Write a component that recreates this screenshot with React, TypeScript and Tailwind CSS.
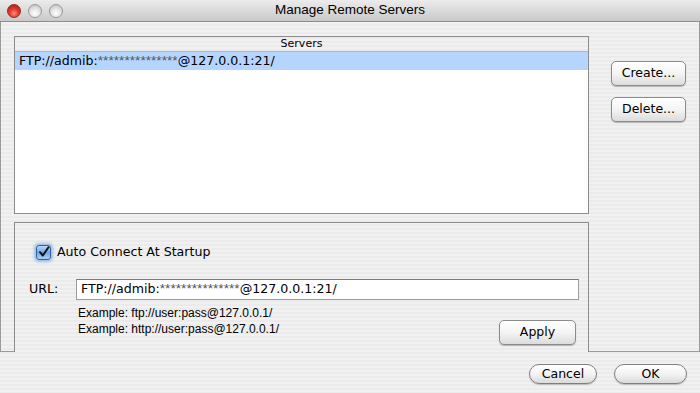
import type { FC, ReactNode } from 'react';

const stripes =
  'bg-[repeating-linear-gradient(180deg,#ebebeb_0px,#ebebeb_2px,#f1f1f1_2px,#f1f1f1_4px)]';

const ui = '"DejaVu Sans", Verdana, sans-serif';

const AquaButton: FC<{ children: ReactNode; className?: string }> = ({ children, className = '' }) => (
  <button
    className={`flex items-center justify-center rounded-[5px] border border-[#8b8b8b] bg-gradient-to-b from-[#ffffff] via-[#f4f4f4] to-[#dcdcdc] text-[12.5px] text-black shadow-[0_1px_1px_rgba(0,0,0,0.25)] ${className}`}
    style={{ fontFamily: ui }}
  >
    {children}
  </button>
);

const PillButton: FC<{ children: ReactNode; className?: string }> = ({ children, className = '' }) => (
  <button
    className={`flex items-center justify-center rounded-full border border-[#7f7f7f] bg-gradient-to-b from-[#ffffff] via-[#f3f3f3] to-[#dadada] text-[12.5px] text-black shadow-[0_1px_1px_rgba(0,0,0,0.2)] ${className}`}
    style={{ fontFamily: ui }}
  >
    {children}
  </button>
);

const TrafficLight: FC<{ red?: boolean }> = ({ red }) => (
  <div
    className={`h-[14px] w-[14px] rounded-full border ${
      red
        ? 'border-[#8e2b22] bg-[radial-gradient(circle_at_50%_70%,#ff8a7a_0%,#e0382b_45%,#9c1c14_100%)]'
        : 'border-[#9a9a9a] bg-[radial-gradient(circle_at_50%_70%,#ffffff_0%,#e2e2e2_50%,#b3b3b3_100%)]'
    }`}
  />
);

const Checkbox: FC = () => (
  <div className="flex h-[15px] w-[15px] items-center justify-center rounded-[3px] border border-[#2f5f9e] bg-gradient-to-b from-[#b9d8f6] via-[#6fa6e4] to-[#a9d1f7] shadow-[0_0_3px_2px_rgba(90,150,230,0.55)]">
    <svg width="12" height="12" viewBox="0 0 12 12">
      <path d="M2 6.2 L4.8 9.5 L10.5 1.2" fill="none" stroke="#111" strokeWidth="2" strokeLinecap="round" strokeLinejoin="round" />
    </svg>
  </div>
);

// masked url: password stars are drawn smaller and lighter, as the Aqua font does
const MaskedUrl: FC = () => (
  <span className="whitespace-nowrap text-[12.6px] text-black" style={{ fontFamily: ui }}>
    FTP://admib:
    <span className="text-[13.7px] text-[#555]" style={{ fontFamily: '"Liberation Sans", Arial, sans-serif' }}>
      ***************
    </span>
    @127.0.0.1:21/
  </span>
);

export default function App() {
  return (
    <div
      className={`flex h-[393px] w-[700px] flex-col overflow-hidden ${stripes}`}
      style={{ fontFamily: '"Liberation Sans", Arial, sans-serif' }}
    >
      {/* title bar */}
      <div className="relative flex h-[22px] shrink-0 items-center border-b border-[#8e8e8e] bg-gradient-to-b from-[#ececec] to-[#c9c9c9]">
        <div className="flex items-center gap-[7px] pl-[7px]">
          <TrafficLight red />
          <TrafficLight />
          <TrafficLight />
        </div>
        <div className="absolute inset-0 flex items-center justify-center text-[13.5px] text-black">
          Manage Remote Servers
        </div>
      </div>

      {/* main panel */}
      <div className="flex h-[330px] shrink-0">
        <div className="w-[14px] border-b border-l border-[#9a9a9a]" />

        <div className="flex w-[575px] flex-col pt-[14px]">
          {/* servers list */}
          <div className="flex h-[178px] flex-col border border-[#8c8c8c] bg-white">
            <div
              className={`flex h-[15px] items-center justify-center border-b border-[#b5b5b5] text-[11px] text-black ${stripes}`}
              style={{ fontFamily: ui }}
            >
              Servers
            </div>
            <div className="flex h-[18px] items-center bg-[#b5d5ff] pl-[4px]">
              <MaskedUrl />
            </div>
          </div>

          {/* settings */}
          <div className="mt-[8px] flex flex-1 flex-col border-l border-r border-t border-[#8c8c8c] pr-[9px] pl-[14px]">
            <div className="mt-[20px] flex items-center gap-[6px] pl-[7px]">
              <Checkbox />
              <span className="text-[12.6px] text-black" style={{ fontFamily: ui }}>
                Auto Connect At Startup
              </span>
            </div>

            <div className="mt-[17px] flex items-center">
              <span className="w-[47px] text-[12.6px] text-black" style={{ fontFamily: ui }}>
                URL:
              </span>
              <div className="flex h-[21px] flex-1 items-center border border-[#9c9c9c] border-t-[#7a7a7a] bg-white pl-[4px]">
                <MaskedUrl />
              </div>
            </div>

            <div className="mt-[3px] flex items-start justify-between pr-[3px]">
              <div className="pl-[49px] pt-[2px] text-[12px] leading-[16px] text-black">
                <div>Example: ftp://user:pass@127.0.0.1/</div>
                <div>Example: http://user:pass@127.0.0.1/</div>
              </div>
              <AquaButton className="mt-[17px] h-[25px] w-[77px]">Apply</AquaButton>
            </div>
          </div>
        </div>

        {/* right buttons */}
        <div className="flex flex-1 flex-col border-b border-r border-[#9a9a9a] pl-[22px] pt-[39px]">
          <AquaButton className="h-[25px] w-[75px]">Create...</AquaButton>
          <AquaButton className="mt-[11px] h-[25px] w-[75px]">Delete...</AquaButton>
        </div>
      </div>

      {/* dialog buttons */}
      <div className="flex flex-1 items-start justify-end gap-[17px] pr-[13px] pt-[12px]">
        <PillButton className="h-[20px] w-[68px]">Cancel</PillButton>
        <PillButton className="h-[20px] w-[73px]">OK</PillButton>
      </div>
    </div>
  );
}
